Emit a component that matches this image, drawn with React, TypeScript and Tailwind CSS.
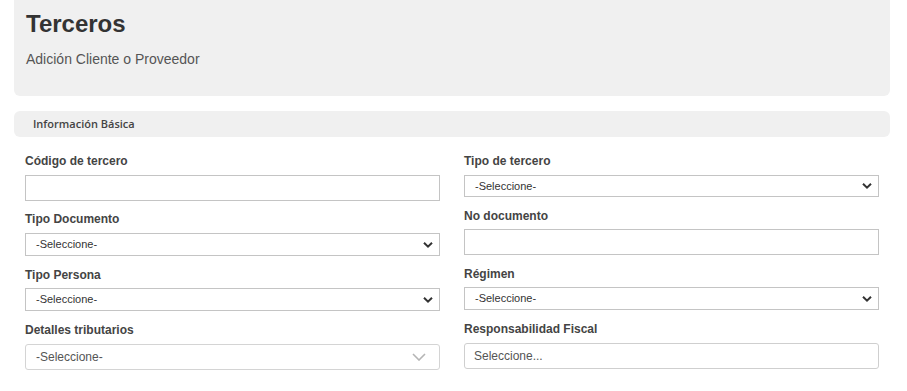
import { ReactNode } from "react";

const Chevron = ({ light }: { light?: boolean }) =>
  light ? (
    <svg width="14" height="8" viewBox="0 0 14 8" className="absolute right-[13px] top-1/2 -translate-y-1/2">
      <path d="M1 1l6 6 6-6" fill="none" stroke="#b5b5b5" strokeWidth="1.6" />
    </svg>
  ) : (
    <svg width="10" height="7" viewBox="0 0 10 7" className="absolute right-[6px] top-1/2 -translate-y-1/2">
      <path d="M1 1.2l4 4 4-4" fill="none" stroke="#333" strokeWidth="2" />
    </svg>
  );

const Field = ({ label, mt, children }: { label: string; mt: string; children: ReactNode }) => (
  <div className={mt}>
    <div className="h-[14px] leading-[14px] text-[12px] font-bold text-[#444] mb-[7px]">{label}</div>
    {children}
  </div>
);

const TextBox = ({ h = "h-[26px]" }: { h?: string }) => (
  <div className={`${h} w-full border border-[#c4c4c4] bg-white`} />
);

const Select = ({ h = "h-[23px]" }: { h?: string }) => (
  <div className={`${h} relative w-full border border-[#c4c4c4] bg-white flex items-center pl-[10px] text-[11px] text-[#333]`}>
    -Seleccione-
    <Chevron />
  </div>
);

const App = () => {
  return (
    <div className="w-[907px] h-[391px] bg-white pl-[14px] pr-[17px] overflow-hidden" style={{ fontFamily: '"Liberation Sans", Arial, sans-serif' }}>
      <div className="h-[96px] bg-[#f0f0f0] rounded-b-md pl-[12px] pt-[10px]">
        <div className="text-[24px] font-bold text-[#333] leading-[28px]">Terceros</div>
        <div className="text-[14px] text-[#555] mt-[12px] leading-[18px]">Adición Cliente o Proveedor</div>
      </div>

      <div className="mt-[15px] h-[26px] bg-[#f0f0f0] rounded-md flex items-center pl-[19px]">
        <span className="text-[11px] font-semibold text-[#444]" style={{ fontFamily: '"Open Sans", sans-serif' }}>
          Información Básica
        </span>
      </div>

      <div className="grid grid-cols-2 gap-x-[24px] px-[11px]">
        <div className="flex flex-col">
          <Field label="Código de tercero" mt="mt-[17px]">
            <TextBox />
          </Field>
          <Field label="Tipo Documento" mt="mt-[11px]">
            <Select />
          </Field>
          <Field label="Tipo Persona" mt="mt-[12px]">
            <div className="-mt-[1px]">
              <Select />
            </div>
          </Field>
          <Field label="Detalles tributarios" mt="mt-[12px]">
            <div className="relative h-[26px] w-full border border-[#d4d4d4] rounded-[3px] bg-white flex items-center pl-[10px] text-[12px] text-[#555]">
              -Seleccione-
              <Chevron light />
            </div>
          </Field>
        </div>

        <div className="flex flex-col">
          <Field label="Tipo de tercero" mt="mt-[17px]">
            <div className="mt-[1px]">
              <Select h="h-[22px]" />
            </div>
          </Field>
          <Field label="No documento" mt="mt-[12px]">
            <div className="-mt-[1px]">
              <TextBox />
            </div>
          </Field>
          <Field label="Régimen" mt="mt-[12px]">
            <div className="-mt-[1px]">
              <Select />
            </div>
          </Field>
          <Field label="Responsabilidad Fiscal" mt="mt-[12px]">
            <div className="h-[26px] w-full border border-[#cfcfcf] rounded-[3px] bg-white flex items-center pl-[9px] text-[12px] text-[#555]">
              Seleccione...
            </div>
          </Field>
        </div>
      </div>
    </div>
  );
};

export default App;
